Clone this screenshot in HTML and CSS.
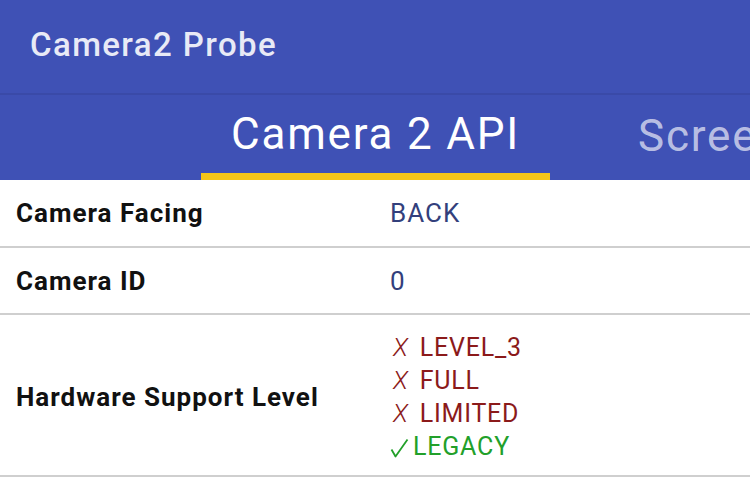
FILE: index.html
```html
<!DOCTYPE html>
<html lang="en">
<head>
	<meta charset="UTF-8">
	<title>Camera2 Probe</title>
	<link rel="stylesheet" href="styles.css">
</head>
<body>
	<div class="app">
		<div class="toolbar">
			<div class="title">Camera2 Probe</div>
		</div>
		<div class="tabs">
			<div class="tab active">Camera 2 API</div>
			<div class="tab">Screen</div>
		</div>
		<div class="rows">
			<div class="row">
				<div class="label">Camera Facing</div>
				<div class="value">BACK</div>
			</div>
			<div class="row">
				<div class="label">Camera ID</div>
				<div class="value">0</div>
			</div>
			<div class="row tall">
				<div class="label">Hardware Support Level</div>
				<div class="value levels">
					<div class="no"><span class="mark">X</span>LEVEL_3</div>
					<div class="no"><span class="mark">X</span>FULL</div>
					<div class="no"><span class="mark">X</span>LIMITED</div>
					<div class="yes">
						<svg class="check" width="19" height="20" viewBox="0 0 19 20">
							<path d="M1.5 11.5 L5.5 18.5 L17.5 1.5" fill="none" stroke="currentColor" stroke-width="1.8" stroke-linejoin="round"/>
						</svg>LEGACY
					</div>
				</div>
			</div>
		</div>
	</div>
</body>
</html>
```

FILE: styles.css
```css
body {
	margin: 0;
	font-family: Roboto, "Noto Sans", sans-serif;
	background: #fff;
}

.app {
	width: 750px;
	height: 482px;
	overflow: hidden;
}

.toolbar {
	height: 93px;
	background: #3f51b5;
	display: flex;
	align-items: center;
	padding-left: 30px;
	border-bottom: 2px solid #3a4aa8;
}

.title {
	color: #e8eaf6;
	font-size: 33px;
	font-weight: 500;
	letter-spacing: 1.4px;
	margin-top: -5px;
}

.tabs {
	height: 85px;
	background: #3f51b5;
	display: flex;
	padding-left: 201px;
	white-space: nowrap;
	overflow: hidden;
}

.tab {
	flex: none;
	height: 100%;
	box-sizing: border-box;
	display: flex;
	align-items: center;
	justify-content: center;
	color: rgba(255, 255, 255, 0.65);
	font-size: 44px;
	letter-spacing: 1.8px;
	padding-bottom: 4px;
}

.tab.active {
	width: 349px;
	color: #fff;
	border-bottom: 7px solid #f5c518;
	padding-bottom: 0;
}

.tab + .tab {
	padding-left: 88px;
}

.row {
	display: flex;
	align-items: center;
	height: 66px;
	border-bottom: 2px solid #cfcfcf;
}

.row + .row {
	height: 65px;
}

.row.tall {
	height: 162px;
	padding-top: 4px;
	box-sizing: border-box;
}

.label {
	width: 374px;
	padding-left: 16px;
	font-size: 26px;
	font-weight: 700;
	letter-spacing: 1px;
	color: #111;
}

.value {
	font-size: 26px;
	letter-spacing: 1px;
	color: #333f7c;
}

.levels {
	font-size: 25px;
	letter-spacing: 0.8px;
}

.no,
.yes {
	line-height: 33px;
	display: flex;
	align-items: baseline;
}

.no {
	color: #8b1a1a;
	margin-left: 3px;
}

.yes {
	color: #22a02a;
	align-items: center;
}

.mark {
	margin-right: 11px;
}

.no .mark {
	font-style: italic;
	font-weight: 300;
}

.check {
	margin-right: 4px;
	margin-top: 2px;
}
```
